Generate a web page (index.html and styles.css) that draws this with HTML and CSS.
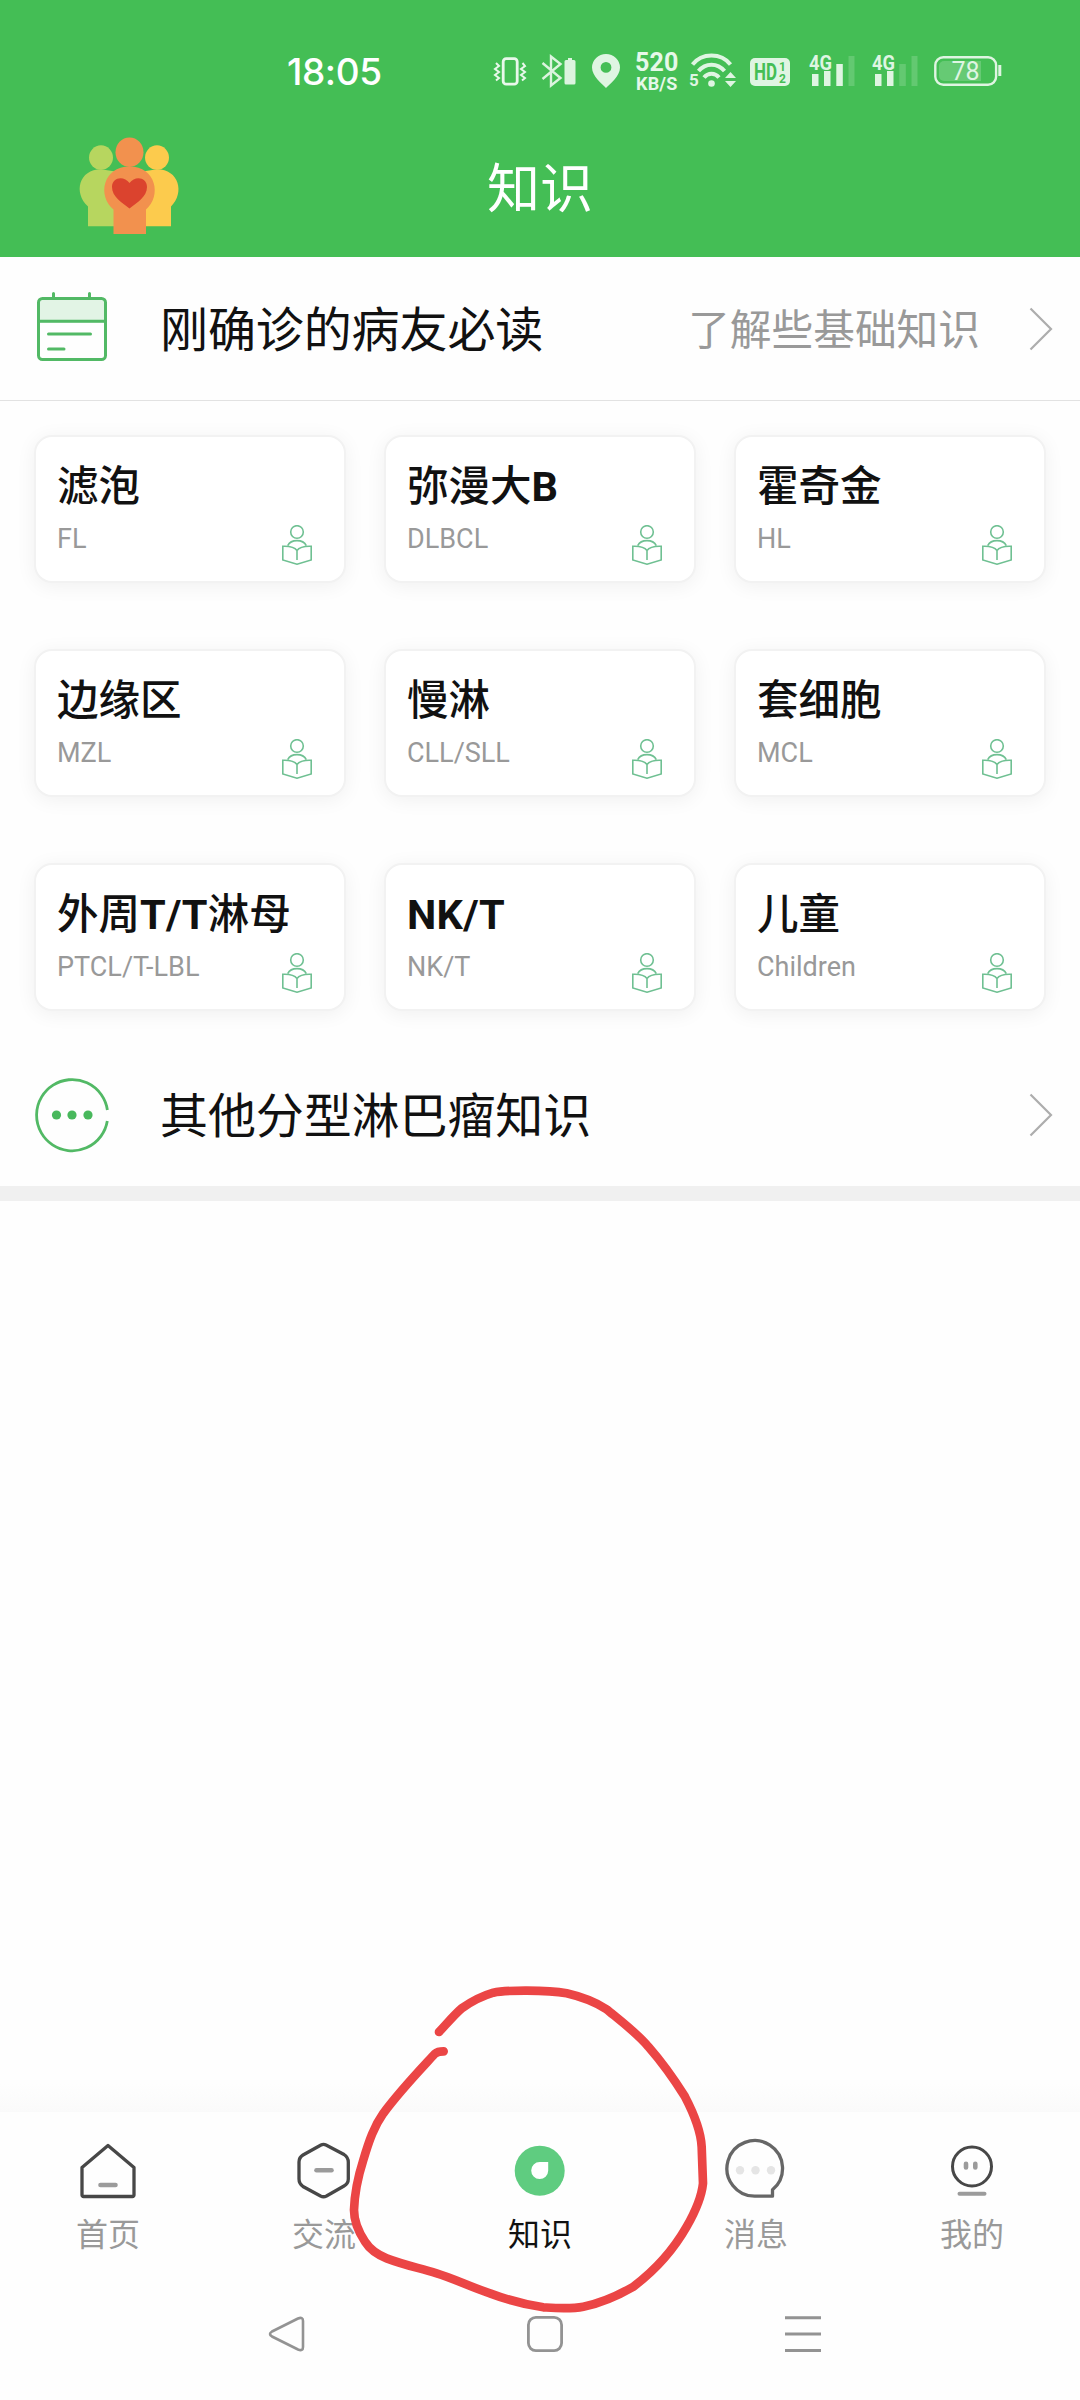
FILE: index.html
```html
<!DOCTYPE html>
<html lang="zh-CN">
<head>
<meta charset="utf-8">
<title>知识</title>
<link rel="stylesheet" href="styles.css">
</head>
<body>
<svg class="symbols" width="0" height="0">
  <symbol id="reader" viewBox="0 0 30 40">
    <g fill="none" stroke="#6fc092" stroke-width="1.600">
      <circle cx="15" cy="7" r="6.3"/>
      <path d="M5.7 20.6C9 13.9 21 13.9 24.3 20.6"/>
      <path d="M15 25.5C12.500 22 8 21 .8 21.300V35L15 39.200 29.200 35V21.300C22 21 17.500 22 15 25.500V35"/>
    </g>
  </symbol>
  <symbol id="chevron" viewBox="0 0 24 44">
    <path d="M1.500 1.500 22 22 1.500 42.500" fill="none" stroke="#adadad" stroke-width="2.200"/>
  </symbol>
</svg>
<div class="screen">
  <header class="header">
    <div class="status">
      <span class="clock">18:05</span>
      <svg class="i-vibrate" width="32" height="29" viewBox="0 0 32 29" fill="none" stroke="#e9f8eb">
        <rect x="9.200" y="1.700" width="14" height="25.500" rx="3" stroke-width="2.800"/>
        <path d="M2 6l3 3-4 3 4 3-4 3 4 3-3 2.500M28.500 6l2.500 3-4 3 4 3-4 3 4 3-3 2.500" stroke-width="2"/>
      </svg>
      <svg class="i-bt" width="35" height="34" viewBox="0 0 35 34">
        <path d="M1.500 9 19.500 24 10 31.500V2.500L19.500 10 1.500 25" fill="none" stroke="#dcf4df" stroke-width="2.400"/>
        <path d="M27 4h4v2h2a1.500 1.500 0 0 1 1.500 1.500V29a1.500 1.500 0 0 1-1.500 1.500h-8a1.500 1.500 0 0 1-1.500-1.500V7.500A1.500 1.500 0 0 1 25 6h2z" fill="#dcf4df"/>
      </svg>
      <svg class="i-pin" width="28" height="34" viewBox="0 0 28 34">
        <path fill-rule="evenodd" d="M14 34C10 30 0 22 0 13.500a14 13.500 0 0 1 28 0C28 22 18 30 14 34zM14 8a5.400 5.400 0 1 0 0 10.800A5.400 5.400 0 0 0 14 8z" fill="#dff5e2"/>
      </svg>
      <span class="speed"><b>520</b><i>KB/S</i></span>
      <svg class="i-wifi" width="48" height="36" viewBox="0 0 48 36">
        <g fill="none" stroke="#dff5e2" stroke-width="4">
          <path d="M3.500 11.500C13-.5 32-.5 41.500 11.500"/>
          <path d="M9.500 18C16.500 9.500 28.500 9.500 35.500 18"/>
          <path d="M15 24.500C19 19.500 26 19.500 30 24.500"/>
        </g>
        <circle cx="22.500" cy="30.500" r="3.300" fill="#dff5e2"/>
        <path d="M36 25h11l-5.500-6zM36 28h11l-5.500 6z" fill="#dff5e2"/>
        <text x="0" y="33" class="tiny">5</text>
      </svg>
      <svg class="i-hd" width="40" height="28" viewBox="0 0 40 28">
        <rect width="40" height="28" rx="5" fill="#dff5e2"/>
        <text x="4" y="22" class="hd" textLength="23" lengthAdjust="spacingAndGlyphs">HD</text>
        <text x="29" y="13" class="hd-sub">1</text><text x="29" y="25" class="hd-sub">2</text>
      </svg>
      <svg class="i-sim" width="46" height="34" viewBox="0 0 46 34" fill="#dff5e2">
        <text x="0" y="15.500" class="net" textLength="23" lengthAdjust="spacingAndGlyphs">4G</text>
        <rect x="3" y="20" width="6.500" height="12"/><rect x="15" y="17" width="6.500" height="15"/>
        <rect x="27.300" y="10" width="6.500" height="22"/><rect x="39.500" y="2" width="6" height="30" opacity=".2"/>
      </svg>
      <svg class="i-sim" width="46" height="34" viewBox="0 0 46 34" fill="#dff5e2">
        <text x="0" y="15.500" class="net" textLength="23" lengthAdjust="spacingAndGlyphs">4G</text>
        <rect x="3" y="20" width="6.500" height="12"/><rect x="15" y="17" width="6.500" height="15"/>
        <rect x="27.300" y="10" width="6.500" height="22" opacity=".2"/><rect x="39.500" y="2" width="6" height="30" opacity=".2"/>
      </svg>
      <svg class="i-batt" width="68" height="30" viewBox="0 0 68 30">
        <rect x="1.300" y="1.300" width="60.800" height="27.400" rx="8" fill="none" stroke="#dff5e2" stroke-width="2.400"/>
        <path d="M10 5h37v20H10a5 5 0 0 1-5-5V10a5 5 0 0 1 5-5z" fill="#dff5e2" opacity=".22"/>
        <path d="M65.800 9v11" stroke="#dff5e2" stroke-width="3"/>
        <text x="31.500" y="24" text-anchor="middle" class="batt">78</text>
      </svg>
    </div>
    <div class="titlebar">
      <svg class="logo" width="98" height="96" viewBox="0 0 98 98" preserveAspectRatio="none">
        <g fill="#b7d65f"><ellipse cx="21" cy="21" rx="12" ry="12.500"/><path d="M21 33C-1 33-7 57 8 71V91H40V36z"/></g>
        <g fill="#fccb4d"><ellipse cx="77" cy="21" rx="12" ry="12.500"/><path d="M77 33c22 0 28 24 14 38V91H58V36z"/></g>
        <g fill="#f2914e"><ellipse cx="49.500" cy="15.500" rx="14" ry="15"/><path d="M49.500 30C23 30 17 60 33.500 74V99H66V74C82 60 76 30 49.500 30z"/></g>
        <path d="M49.500 73C42 67 32 61 32 51c0-10 12-12 17.500-4C55 39 67 41 67 51c0 10-10 16-17.500 22z" fill="#db432e"/>
      </svg>
      <h1>知识</h1>
    </div>
  </header>

  <main>
    <a class="row first">
      <svg class="row-icon" width="74" height="74" viewBox="0 0 74 74">
        <path d="M3.500 31V10.500a4 4 0 0 1 4-4h59a4 4 0 0 1 4 4V31z" fill="#e2f4e5"/>
        <g fill="none" stroke="#52b965" stroke-width="3" stroke-linecap="round">
          <rect x="3.500" y="6.500" width="67" height="61" rx="4"/>
          <path d="M3.500 29.300H70.500M13.500 42H55.500M13.500 57H29M18.500 1.500V6M54.500 1.500V6"/>
        </g>
      </svg>
      <span class="row-title">刚确诊的病友必读</span>
      <span class="row-note">了解些基础知识</span>
      <svg class="chevron" width="24" height="44"><use href="#chevron"/></svg>
    </a>

    <section class="grid">
      <div class="card"><h2>滤泡</h2><p>FL</p><svg class="reader" width="30" height="40"><use href="#reader"/></svg></div>
      <div class="card"><h2>弥漫大<b>B</b></h2><p>DLBCL</p><svg class="reader" width="30" height="40"><use href="#reader"/></svg></div>
      <div class="card"><h2>霍奇金</h2><p>HL</p><svg class="reader" width="30" height="40"><use href="#reader"/></svg></div>
      <div class="card"><h2>边缘区</h2><p>MZL</p><svg class="reader" width="30" height="40"><use href="#reader"/></svg></div>
      <div class="card"><h2>慢淋</h2><p>CLL/SLL</p><svg class="reader" width="30" height="40"><use href="#reader"/></svg></div>
      <div class="card"><h2>套细胞</h2><p>MCL</p><svg class="reader" width="30" height="40"><use href="#reader"/></svg></div>
      <div class="card"><h2>外周<b>T/T</b>淋母</h2><p>PTCL/T-LBL</p><svg class="reader" width="30" height="40"><use href="#reader"/></svg></div>
      <div class="card"><h2><b>NK/T</b></h2><p>NK/T</p><svg class="reader" width="30" height="40"><use href="#reader"/></svg></div>
      <div class="card"><h2>儿童</h2><p>Children</p><svg class="reader" width="30" height="40"><use href="#reader"/></svg></div>
    </section>

    <a class="row last">
      <svg class="row-icon" width="74" height="74" viewBox="0 0 74 74">
        <path d="M72.400 32A35.600 35.600 0 1 0 72.300 43" fill="none" stroke="#52b965" stroke-width="2.800"/>
        <g fill="#48b85c"><circle cx="21.500" cy="37" r="4.600"/><circle cx="37" cy="37" r="4.600"/><circle cx="53" cy="37" r="4.600"/></g>
      </svg>
      <span class="row-title">其他分型淋巴瘤知识</span>
      <svg class="chevron" width="24" height="44"><use href="#chevron"/></svg>
    </a>
  </main>

  <footer>
    <div class="fade"></div>
    <nav class="tabs">
      <a class="tab">
        <svg width="64" height="64" viewBox="0 0 64 64" fill="none">
          <path d="M32 6.500 58 28.500V56a1.500 1.500 0 0 1-1.500 1.500h-49A1.500 1.500 0 0 1 6 56V28.500z" stroke="#474747" stroke-width="3.300" stroke-linejoin="round"/>
          <path d="M24.500 46H39.500" stroke="#9b9b9b" stroke-width="4.600" stroke-linecap="round"/>
        </svg>
        <span>首页</span>
      </a>
      <a class="tab">
        <svg width="64" height="64" viewBox="0 0 64 64" fill="none">
          <path d="M29 6Q31.500 4.700 34 6L52 15.500Q56.300 18.500 56.300 23V40Q56.300 44.500 52 47L34.500 57Q31.500 58.500 28.500 57L11 47.500Q7 44.500 7 40V23Q7 18.500 11 16z" stroke="#474747" stroke-width="3.300"/>
          <path d="M24.500 31.300H39.500" stroke="#9b9b9b" stroke-width="4.600" stroke-linecap="round"/>
        </svg>
        <span>交流</span>
      </a>
      <a class="tab active">
        <svg width="64" height="64" viewBox="0 0 64 64">
          <circle cx="31.700" cy="31.700" r="25" fill="#5fcc80"/>
          <path d="M31.700 23H40.200V31.700A8.500 8.500 0 1 1 31.700 23z" fill="#fff"/>
        </svg>
        <span>知识</span>
      </a>
      <a class="tab">
        <svg width="64" height="64" viewBox="0 0 64 64">
          <path d="M31.500 57.200A27.800 27.800 0 1 1 48.500 50.800V57.200z" fill="none" stroke="#666" stroke-width="3.300" stroke-linejoin="round"/>
          <g fill="#e5e5e5"><circle cx="16" cy="31.300" r="4.200"/><circle cx="31.500" cy="31.300" r="4.200"/><circle cx="47" cy="31.300" r="4.200"/></g>
        </svg>
        <span>消息</span>
      </a>
      <a class="tab">
        <svg width="64" height="64" viewBox="0 0 64 64" fill="none">
          <circle cx="32" cy="27.500" r="19.500" stroke="#474747" stroke-width="3"/>
          <path d="M26 24.800V28.500M35.300 24.800V28.500" stroke="#9b9b9b" stroke-width="4.600" stroke-linecap="round"/>
          <path d="M19.500 54.800H44.500" stroke="#9b9b9b" stroke-width="4" stroke-linecap="round"/>
        </svg>
        <span>我的</span>
      </a>
    </nav>
    <div class="sysnav">
      <svg width="38" height="38" viewBox="0 0 38 38"><path d="M4 16.500 30 3.500Q35 1.500 35 6V32Q35 36.500 30 34.500L4 21.500Q0 19 4 16.500z" fill="none" stroke="#939393" stroke-width="2.600"/></svg>
      <svg width="38" height="38" viewBox="0 0 38 38"><rect x="2.400" y="2.400" width="33.200" height="33.200" rx="7.500" fill="none" stroke="#939393" stroke-width="2.800"/></svg>
      <svg width="38" height="38" viewBox="0 0 38 38"><path d="M1 2.700H37M1 19H37M1 35.500H37" stroke="#939393" stroke-width="3"/></svg>
    </div>
  </footer>

  <svg class="ink" width="400" height="430" viewBox="0 0 1200 1290">
    <path d="M297 186C330 150 345 132 365 115Q412 82 460 68C495 60 620 59 680 70Q750 86 800 118C835 147 890 188 925 230C960 270 1010 340 1035 380Q1082 470 1085 530L1089 640C1085 680 1060 735 1040 770C1000 840 940 905 880 950C840 973 790 998 730 1010C690 1018 630 1013 610 1012C550 1003 490 985 450 970C390 950 340 925 290 910C230 892 190 884 140 865Q95 847 75 815C52 780 42 750 42 720C44 660 54 620 70 570C88 510 102 470 130 430C180 362 240 300 285 251Q293 244 311 244"/>
  </svg>
</div>
</body>
</html>
```
FILE: styles.css
```css
* { box-sizing: border-box; margin: 0; padding: 0; }
body {
  width: 1080px;
  background: #fefefe;
  font-family: Roboto, "Noto Sans CJK SC", sans-serif;
}
svg { display: block; flex: none; overflow: visible; }
.symbols { position: absolute; }
.screen {
  position: relative;
  width: 1080px;
  height: 2400px;
  overflow: hidden;
  display: flex;
  flex-direction: column;
}

.header { height: 257px; background: #44be55; color: #fff; }
.status {
  height: 120px;
  padding: 52px 0 0 287px;
  display: flex;
  align-items: flex-start;
}
.clock {
  width: 207px;
  font: 500 37px/40px Inter, sans-serif;
  letter-spacing: -.4px;
}
.i-vibrate { margin-top: 5px; }
.i-bt { margin: 2px 0 0 15px; }
.i-pin { margin: 2px 0 0 16px; }
.speed { width: 44px; margin-left: 15px; display: flex; flex-direction: column; color: #e6f8e9; }
.speed b { font: 700 25px/22px Roboto, sans-serif; letter-spacing: .2px; }
.speed i { font: 700 18px/20px Roboto, sans-serif; letter-spacing: .2px; padding-left: 1px; }
.i-wifi { margin: 1px 0 0 10px; }
.i-hd { margin: 6px 0 0 13px; }
.i-sim { margin: 2px 0 0 19px; }
.i-sim + .i-sim { margin-left: 17px; }
.i-batt { margin: 4px 0 0 16px; }
.tiny { font: 700 17px Roboto, sans-serif; fill: #dff5e2; }
.hd { font: 700 23px Roboto, sans-serif; fill: #44be55; }
.hd-sub { font: 700 12px/1 Roboto, sans-serif; fill: #44be55; }
.net { font: 700 20px Roboto, sans-serif; }
.batt { font: 400 25px Roboto, sans-serif; fill: #dff5e2; }

.titlebar { height: 137px; padding-left: 80px; display: flex; }
.logo { margin-top: 17px; }
.titlebar h1 {
  width: 724px;
  text-align: center;
  font: 400 53px/80px "Noto Sans CJK SC", sans-serif;
  padding-top: 25px;
}

.row { display: flex; align-items: center; padding-left: 35px; color: #111; }
.row.first { height: 144px; border-bottom: 1px solid #e2e2e2; }
.row-title {
  margin-left: 51px;
  padding-bottom: 5px;
  font: 400 48px/70px "Noto Sans CJK SC", sans-serif;
  letter-spacing: -.1px;
}
.row-note {
  margin-left: auto;
  margin-right: 49px;
  padding-bottom: 4px;
  font: 400 41.700px/60px "Noto Sans CJK SC", sans-serif;
  color: #999;
}
.chevron { margin-right: 27px; }
.row.last { height: 172px; border-bottom: 15px solid #f0f0f0; }
.row.last .row-icon, .row.last .chevron, .row.last .row-title { margin-top: 1px; }
.row.last .chevron { margin-left: auto; }

.grid {
  display: grid;
  grid-template-columns: repeat(3, 312px);
  grid-auto-rows: 148px;
  gap: 66px 38px;
  padding: 34px 0 18px 34px;
}
.card {
  display: grid;
  grid-template-columns: 1fr 30px;
  grid-template-rows: 66px 35px;
  align-content: start;
  padding: 18px 32px 0 21px;
  border: 2px solid #f2f2f2;
  border-radius: 18px;
  background: #fff;
  box-shadow: 0 3px 20px rgba(0, 0, 0, .06);
}
.card h2 {
  grid-column: 1 / 3;
  font: 500 41.500px/64px Roboto, "Noto Sans CJK SC", sans-serif;
  color: #111;
  white-space: nowrap;
}
.card h2 b { font-weight: 700; letter-spacing: .3px; }
.card p { font: 400 27px/36px Roboto, sans-serif; color: #999; }
.reader { margin-top: 4px; }

.row.last { padding-top: 13px; }

footer { margin-top: auto; }
.fade { height: 28px; background: linear-gradient(#fefefe, #fafafa); }
.tabs { height: 170px; display: grid; grid-template-columns: repeat(5, 216px); background: #fefefe; }
.tab { display: flex; flex-direction: column; align-items: center; padding-top: 27px; color: #999; }
.tab span { font: 400 32px/44px "Noto Sans CJK SC", sans-serif; margin-top: 7px; }
.tab.active { color: #111; }
.sysnav { height: 118px; padding: 33px 258px 0 268px; display: flex; justify-content: space-between; }

/* Hand-drawn marker stroke floating above the tab bar */
.ink { position: absolute; left: 340px; top: 1970px; pointer-events: none; }
.ink path { fill: none; stroke: #eb4545; stroke-width: 26; stroke-linecap: round; stroke-linejoin: round; }
```
